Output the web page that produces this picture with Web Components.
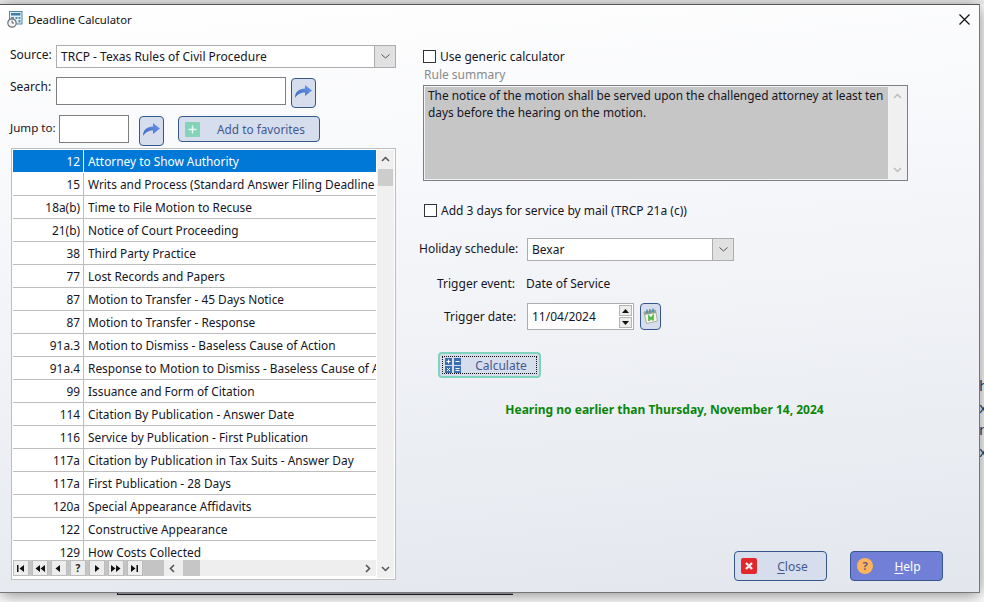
<!DOCTYPE html>
<html>
<head>
<meta charset="utf-8">
<title>Deadline Calculator</title>
<style>
html, body { margin: 0; height: 100%; overflow: hidden; background: #fff; }
body { font: 12px "Noto Sans", "Open Sans", sans-serif; color: #111; }
</style>
</head>
<body>
<app-backdrop>
  <span>h</span><span>x</span><span>n</span><span>x</span>
</app-backdrop>
<deadline-dialog></deadline-dialog>

<script>
const ARROW = `<svg width="19" height="15" viewBox="0 0 19 15"><defs><linearGradient id="a" x1="0" y1="1" x2="1" y2="0"><stop offset="0" stop-color="#3c66b8"/><stop offset="1" stop-color="#6d9af0"/></linearGradient></defs><path d="M1 14C1 8 5 4.500 11 4.500V1l7 5.500L11 12V8.500C7 8.500 3.500 10 1 14Z" fill="url(#a)"/></svg>`;

class AppBackdrop extends HTMLElement
{
    constructor()
    {
        super();
        this.attachShadow({ mode : "open" }).innerHTML = `
        <style>
        :host{ display: block; width: 984px; height: 602px; background: #fff; overflow: hidden; }
        .top{ height: 4px; background: #efefef; }
        .side{ display: flex; flex-direction: column; gap: 4px; padding: 372px 0 0 979px; height: 588px; box-sizing: border-box; font-size: 15px; line-height: 18px; color: #0f4f86; }
        .rule{ box-sizing: border-box; width: 396px; height: 3px; margin-left: 117px; background: #b4bacb; border-left: 1px solid #222; border-bottom: 1px solid #222; }
        </style>
        <div class="top"></div>
        <div class="side"><slot></slot></div>
        <div class="rule"></div>`;
    }
}

class TitleBar extends HTMLElement
{
    constructor()
    {
        super();
        this.attachShadow({ mode : "open" }).innerHTML = `
        <style>
        :host{ display: flex; align-items: center; height: 28px; padding-left: 7px; font-size: 11.3px; color: #111; }
        svg{ display: block; }
        span{ margin-left: 5px; flex: 1; }
        .x{ margin: 0 9px 0 0; }
        </style>
        <svg width="16" height="17" viewBox="0 0 16 17">
          <rect x="2.500" y="0.500" width="12.500" height="12.500" fill="#e4eef5" stroke="#4d86a8"/>
          <rect x="4" y="2" width="9.500" height="2.500" fill="#3f7fa6"/>
          <path d="M4 6h3v2H4zM8.500 6h2v2h-2zM11.500 6h2v2h-2zM11.500 9h2v2.500h-2z" fill="#4d96b8"/>
          <circle cx="5" cy="12" r="4.200" fill="#f4f4f4" stroke="#6f7478" stroke-width="1.200"/>
          <path d="M5 9.500V12h2" fill="none" stroke="#555" stroke-width="0.900"/>
        </svg>
        <span><slot></slot></span>
        <svg class="x" width="11" height="11" viewBox="0 0 11 11"><path d="M.5.500l10 10M10.500.500l-10 10" stroke="#111" stroke-width="1.200"/></svg>`;
    }
}

class ComboBox extends HTMLElement
{
    constructor()
    {
        super();
        this.attachShadow({ mode : "open" }).innerHTML = `
        <style>
        :host{ display: flex; box-sizing: border-box; height: 23px; border: 1px solid #adadad; background: #fff; }
        .v{ flex: 1; padding-left: 4px; line-height: 21px; color: #15151f; white-space: nowrap; overflow: hidden; }
        .b{ width: 20px; background: #e1e1e1; border-left: 1px solid #adadad; display: flex; align-items: center; justify-content: center; }
        </style>
        <div class="v"><slot></slot></div>
        <div class="b"><svg width="9" height="5" viewBox="0 0 9 5"><path d="M.5.500l4 3.500 4-3.500" fill="none" stroke="#555"/></svg></div>`;
    }
}

class TextField extends HTMLElement
{
    constructor()
    {
        super();
        this.attachShadow({ mode : "open" }).innerHTML = `
        <style>
        :host{ display: block; box-sizing: border-box; background: #fff; border: 1px solid #7f7f7f; }
        </style><slot></slot>`;
    }
}

class SkinButton extends HTMLElement
{
    constructor()
    {
        super();
        this.attachShadow({ mode : "open" }).innerHTML = `
        <style>
        :host{ display: flex; align-items: center; box-sizing: border-box; border: 1px solid #35578c; border-radius: 4px; background: #d6dded; color: #44598f; font-size: 12px; }
        :host([help]){ background: #717fd6; color: #fff; }
        :host([focused]){ border: 2px solid #7fd3bd; background: #d6dded; padding: 2px; }
        :host([icon-only]){ justify-content: center; }
        .in{ display: flex; align-items: center; flex: 1; height: 100%; box-sizing: border-box; }
        :host([icon-only]) .in{ justify-content: center; }
        :host([focused]) .in{ border: 1px dotted #111; }
        ::slotted([slot=icon]){ display: block; flex: none; }
        .t{ flex: 1; text-align: center; padding-left: var(--nudge, 0); }
        :host([icon-only]) .t{ display: none; }
        </style>
        <div class="in"><slot name="icon"></slot><div class="t"><slot></slot></div></div>`;
    }
}

class CheckRow extends HTMLElement
{
    constructor()
    {
        super();
        this.attachShadow({ mode : "open" }).innerHTML = `
        <style>
        :host{ display: flex; align-items: center; gap: 4px; color: #15151f; }
        i{ display: block; box-sizing: border-box; width: 13px; height: 13px; border: 1px solid #333; background: #fff; }
        </style>
        <i></i><span><slot></slot></span>`;
    }
}

class RuleRow extends HTMLElement
{
    constructor()
    {
        super();
        this.attachShadow({ mode : "open" }).innerHTML = `
        <style>
        :host{ display: flex; box-sizing: border-box; height: 23px; border-bottom: 1px solid #bdbdbd; line-height: 23px; font-size: 11.87px; color: #15151f; white-space: nowrap; flex: none; }
        :host([selected]){ background: #0078d7; color: #fff; border-bottom-color: #fff; }
        .n{ width: 71px; box-sizing: border-box; padding-right: 3px; text-align: right; border-right: 1px solid #bdbdbd; flex: none; }
        :host([selected]) .n{ border-right-color: #fff; }
        .t{ padding-left: 4px; flex: 1; overflow: hidden; }
        </style>
        <div class="n">${this.getAttribute("num")}</div>
        <div class="t"><slot></slot></div>`;
    }
}

class NavBar extends HTMLElement
{
    constructor()
    {
        super();
        const glyphs = [
            "M1 1h1.500v7H1zM8 1v7L3.500 4.500z",
            "M5 1v7L.5 4.500zM10 1v7L5.500 4.500z",
            "M6 1v7L1.500 4.500z",
            "",
            "M3 1v7l4.500-3.500z",
            "M0 1v7l4.500-3.500zM5 1v7l4.500-3.500z",
            "M1 1v7l4.500-3.500zM6.500 1H8v7H6.500z"
        ];
        const buttons = glyphs.map(d => d
            ? `<b><svg width="10" height="9" viewBox="0 0 10 9"><path d="${d}" fill="#111"/></svg></b>`
            : `<b class="q">?</b>`).join("");
        this.attachShadow({ mode : "open" }).innerHTML = `
        <style>
        :host{ display: flex; height: 16px; flex: none; background: #c4c4c4; }
        .nav{ display: flex; gap: 3px; width: 151px; flex: none; }
        b{ box-sizing: border-box; width: 16px; height: 16px; background: #ededed; border: 1px solid #bdbdbd; display: flex; align-items: center; justify-content: center; }
        .q{ font: bold 10px/14px "Noto Sans", sans-serif; color: #222; }
        .hs{ flex: 1; background: #eee; display: flex; align-items: center; padding: 0 5px; gap: 8px; }
        .th{ width: 17px; height: 16px; background: #c6c6c6; }
        .sp{ flex: 1; }
        </style>
        <div class="nav">${buttons}</div>
        <div class="hs">
          <svg width="6" height="9" viewBox="0 0 6 9"><path d="M5 1L1.500 4.500 5 8" fill="none" stroke="#555" stroke-width="1.600"/></svg>
          <div class="th"></div><div class="sp"></div>
          <svg width="6" height="9" viewBox="0 0 6 9"><path d="M1 1l3.500 3.500L1 8" fill="none" stroke="#555" stroke-width="1.600"/></svg>
        </div>`;
    }
}

class VScroll extends HTMLElement
{
    constructor()
    {
        super();
        this.attachShadow({ mode : "open" }).innerHTML = `
        <style>
        :host{ display: flex; flex-direction: column; align-items: center; width: 17px; flex: none; background: #f0f0f0; box-sizing: border-box; padding: 6px 0; }
        .th{ width: 15px; height: var(--thumb, 0); margin-top: 7px; background: #cdcdcd; }
        .sp{ flex: 1; }
        svg{ flex: none; display: block; }
        path{ fill: none; stroke: var(--arrow, #555); stroke-width: 1.500; }
        </style>
        <svg width="9" height="6" viewBox="0 0 9 6"><path d="M1 5l3.500-3.500L8 5"/></svg>
        <div class="th"></div><div class="sp"></div>
        <svg width="9" height="6" viewBox="0 0 9 6"><path d="M1 1l3.500 3.500L8 1"/></svg>`;
    }
}

class RuleGrid extends HTMLElement
{
    constructor()
    {
        super();
        this.attachShadow({ mode : "open" }).innerHTML = `
        <style>
        :host{ display: flex; box-sizing: border-box; height: 432px; border: 1px solid #bdbdbd; background: #fff; padding: 1px; }
        .main{ width: 363px; flex: none; display: flex; flex-direction: column; }
        .rows{ flex: 1; min-height: 0; overflow: hidden; display: flex; flex-direction: column; }
        v-scroll{ --thumb: 17px; margin-left: 1px; }
        nav-bar{ margin-bottom: 2px; }
        </style>
        <div class="main">
          <div class="rows"><slot></slot></div>
          <nav-bar></nav-bar>
        </div>
        <v-scroll></v-scroll>`;
    }
}

const RULES = [
    ["12", "Attorney to Show Authority"],
    ["15", "Writs and Process (Standard Answer Filing Deadline"],
    ["18a(b)", "Time to File Motion to Recuse"],
    ["21(b)", "Notice of Court Proceeding"],
    ["38", "Third Party Practice"],
    ["77", "Lost Records and Papers"],
    ["87", "Motion to Transfer - 45 Days Notice"],
    ["87", "Motion to Transfer - Response"],
    ["91a.3", "Motion to Dismiss - Baseless Cause of Action"],
    ["91a.4", "Response to Motion to Dismiss - Baseless Cause of Action"],
    ["99", "Issuance and Form of Citation"],
    ["114", "Citation By Publication - Answer Date"],
    ["116", "Service by Publication - First Publication"],
    ["117a", "Citation by Publication in Tax Suits - Answer Day"],
    ["117a", "First Publication - 28 Days"],
    ["120a", "Special Appearance Affidavits"],
    ["122", "Constructive Appearance"],
    ["129", "How Costs Collected"]
];

class DeadlineDialog extends HTMLElement
{
    constructor()
    {
        super();
        const rows = RULES.map((r, i) =>
            `<rule-row num="${r[0]}"${i == 0 ? " selected" : ""}>${r[1]}</rule-row>`).join("");
        this.attachShadow({ mode : "open" }).innerHTML = `
        <style>
        :host{ position: absolute; left: 0; top: 4px; width: 980px; height: 589px; box-sizing: border-box; display: block;
               border-top: 1px solid #555; border-right: 1px solid #777; border-bottom: 1px solid #777;
               background: linear-gradient(175deg, #ffffff 0%, #f6f7fa 35%, #e3e7ed 100%);
               box-shadow: 0 2px 16px rgba(0,0,0,.48); }
        .body{ display: grid; grid-template-columns: 386px 1fr; column-gap: 23px; padding: 12px 0 0 10px; }
        .left{ display: flex; flex-direction: column; }
        .row{ display: flex; }
        .lbl{ color: #15151f; white-space: nowrap; }
        .source{ align-items: center; height: 23px; }
        .source .lbl{ width: 46px; margin-top: -4px; }
        .source combo-box{ flex: 1; }
        .search{ margin-top: 9px; height: 31px; }
        .search .lbl{ width: 46px; margin-top: 1px; }
        .search text-field{ width: 230px; height: 28px; }
        .search skin-button{ margin: 1px 0 0 5px; width: 25px; height: 30px; }
        .jump{ margin-top: 7px; height: 33px; }
        .jump .lbl{ width: 49px; margin-top: 5px; font-size: 11.6px; }
        .jump text-field{ width: 70px; height: 28px; }
        .jump .go{ margin: 1px 0 0 10px; width: 25px; height: 30px; }
        .jump .fav{ margin: 1px 0 0 14px; width: 142px; height: 26px; padding-left: 6px; --nudge: 3px; font-size: 11.8px; }
        rule-grid{ margin-left: 1px; }
        .right{ display: flex; flex-direction: column; padding: 1px 0 0 4px; }
        .generic{ height: 20px; }
        .caption{ color: #8a8a8a; line-height: 17px; margin: 0 0 0 1px; height: 19px; }
        .summary{ display: flex; box-sizing: border-box; width: 485px; height: 96px; border: 1px solid #7f7f7f; padding: 1px; background: #f1f2f5; }
        .summary .txt{ flex: 1; background: #c6c6c6; padding: 0 3px; line-height: 17px; font-size: 11.85px; color: #15151f; }
        .summary v-scroll{ --arrow: #bbb; margin-left: 1px; }
        .mail{ margin: 19px 0 0 1px; height: 20px; }
        .form{ margin-left: -4px; display: flex; flex-direction: column; }
        .holiday{ margin-top: 18px; align-items: center; height: 23px; }
        .holiday .lbl{ width: 108px; margin-top: -2px; }
        .holiday combo-box{ width: 207px; }
        .event{ margin-top: 13px; height: 20px; line-height: 20px; padding-left: 18px; }
        .event .lbl{ width: 89px; }
        .date{ margin-top: 9px; align-items: center; height: 27px; padding-left: 25px; }
        .date .lbl{ width: 83px; }
        .spin{ display: flex; box-sizing: border-box; width: 107px; height: 27px; border: 1px solid #adadad; background: #fff; line-height: 25px; padding-left: 4px; color: #15151f; }
        .spin span{ flex: 1; }
        .ud{ display: flex; flex-direction: column; justify-content: center; gap: 1px; width: 13px; margin: 1px 1px 1px 0; }
        .ud i{ flex: 1; background: #ececec; border: 1px solid #b5b5b5; display: flex; align-items: center; justify-content: center; }
        .cal{ margin-left: 6px; width: 21px; height: 27px; }
        .calc{ margin: 22px 0 0 19px; width: 103px; height: 26px; --nudge: 5px; }
        .result{ margin: 22px 0 0 1px; width: 489px; text-align: center; font-weight: 700; font-size: 12px; color: #0a860a; height: 20px; line-height: 20px; }
        .foot{ position: absolute; left: 734px; top: 546px; display: flex; gap: 23px; }
        .foot skin-button{ width: 93px; height: 30px; padding-left: 6px; }
        .foot .close{ --nudge: 2px; }
        u{ text-underline-offset: 2px; }
        </style>
        <title-bar>Deadline Calculator</title-bar>
        <div class="body">
          <div class="left">
            <div class="row source"><span class="lbl">Source:</span><combo-box>TRCP - Texas Rules of Civil Procedure</combo-box></div>
            <div class="row search"><span class="lbl">Search:</span><text-field></text-field>
              <skin-button icon-only><span slot="icon">${ARROW}</span></skin-button></div>
            <div class="row jump"><span class="lbl">Jump to:</span><text-field></text-field>
              <skin-button class="go" icon-only><span slot="icon">${ARROW}</span></skin-button>
              <skin-button class="fav"><svg slot="icon" width="15" height="15" viewBox="0 0 15 15"><rect width="15" height="15" rx="1" fill="#82d3b8"/><path d="M7.500 3.500v8M3.500 7.500h8" stroke="#e8f7f1" stroke-width="1.400"/></svg>Add to favorites</skin-button>
            </div>
            <rule-grid>${rows}</rule-grid>
          </div>
          <div class="right">
            <check-row class="generic">Use generic calculator</check-row>
            <div class="caption">Rule summary</div>
            <div class="summary"><div class="txt">The notice of the motion shall be served upon the challenged attorney at least ten days before the hearing on the motion.</div><v-scroll></v-scroll></div>
            <check-row class="mail">Add 3 days for service by mail (TRCP 21a (c))</check-row>
            <div class="form">
              <div class="row holiday"><span class="lbl">Holiday schedule:</span><combo-box>Bexar</combo-box></div>
              <div class="row event"><span class="lbl">Trigger event:</span><span class="lbl">Date of Service</span></div>
              <div class="row date"><span class="lbl">Trigger date:</span>
                <div class="spin"><span>11/04/2024</span><div class="ud">
                  <i><svg width="7" height="4" viewBox="0 0 7 4"><path d="M3.500 0L7 4H0z" fill="#111"/></svg></i>
                  <i><svg width="7" height="4" viewBox="0 0 7 4"><path d="M0 0h7L3.500 4z" fill="#111"/></svg></i>
                </div></div>
                <skin-button class="cal" icon-only><svg slot="icon" width="15" height="17" viewBox="0 0 15 17"><path d="M1 4l11.500-2 2 11-11 2.500z" fill="#f4f5ea" stroke="#a9b0a0"/><path d="M1 4l11.500-2 .5 3-11.500 2z" fill="#8fa392"/><path d="M4 1.500v3.500M7 1v3.500M10 .5V4" stroke="#3e7fb0" stroke-width="1.200"/><path d="M6 13V8.500l2 2.500 2-3v4.500" fill="none" stroke="#4fb843" stroke-width="1.700"/></svg></skin-button>
              </div>
              <skin-button class="calc" focused><svg slot="icon" width="16" height="15" viewBox="0 0 16 15" style="margin-left:2px"><path d="M0 0h7v7H0zM9 0h7v7H9zM0 8h7v7H0zM9 8h7v7H9z" fill="#3d6fb0"/><path d="M3.500 1.500v4M1.500 3.500h4M10.500 3.500h4M2 10l3 3M5 10l-3 3M10.500 10.500h4M10.500 12.500h4" stroke="#fff"/></svg>Calculate</skin-button>
              <div class="result">Hearing no earlier than Thursday, November 14, 2024</div>
            </div>
          </div>
        </div>
        <div class="foot">
          <skin-button class="close"><svg slot="icon" width="16" height="16" viewBox="0 0 16 16"><rect width="16" height="16" rx="2" fill="#e2282d"/><path d="M5 5l6 6M11 5l-6 6" stroke="#eee" stroke-width="2.400"/></svg><u>C</u>lose</skin-button>
          <skin-button help><svg slot="icon" width="16" height="16" viewBox="0 0 16 16"><circle cx="8" cy="8" r="8" fill="#fbb45c"/><text x="8" y="12" text-anchor="middle" font-family="Noto Sans" font-weight="700" font-size="11" fill="#6b5a80">?</text></svg><u>H</u>elp</skin-button>
        </div>`;
    }
}

customElements.define("app-backdrop", AppBackdrop);
customElements.define("title-bar", TitleBar);
customElements.define("combo-box", ComboBox);
customElements.define("text-field", TextField);
customElements.define("skin-button", SkinButton);
customElements.define("check-row", CheckRow);
customElements.define("rule-row", RuleRow);
customElements.define("nav-bar", NavBar);
customElements.define("v-scroll", VScroll);
customElements.define("rule-grid", RuleGrid);
customElements.define("deadline-dialog", DeadlineDialog);
</script>
</body>
</html>
